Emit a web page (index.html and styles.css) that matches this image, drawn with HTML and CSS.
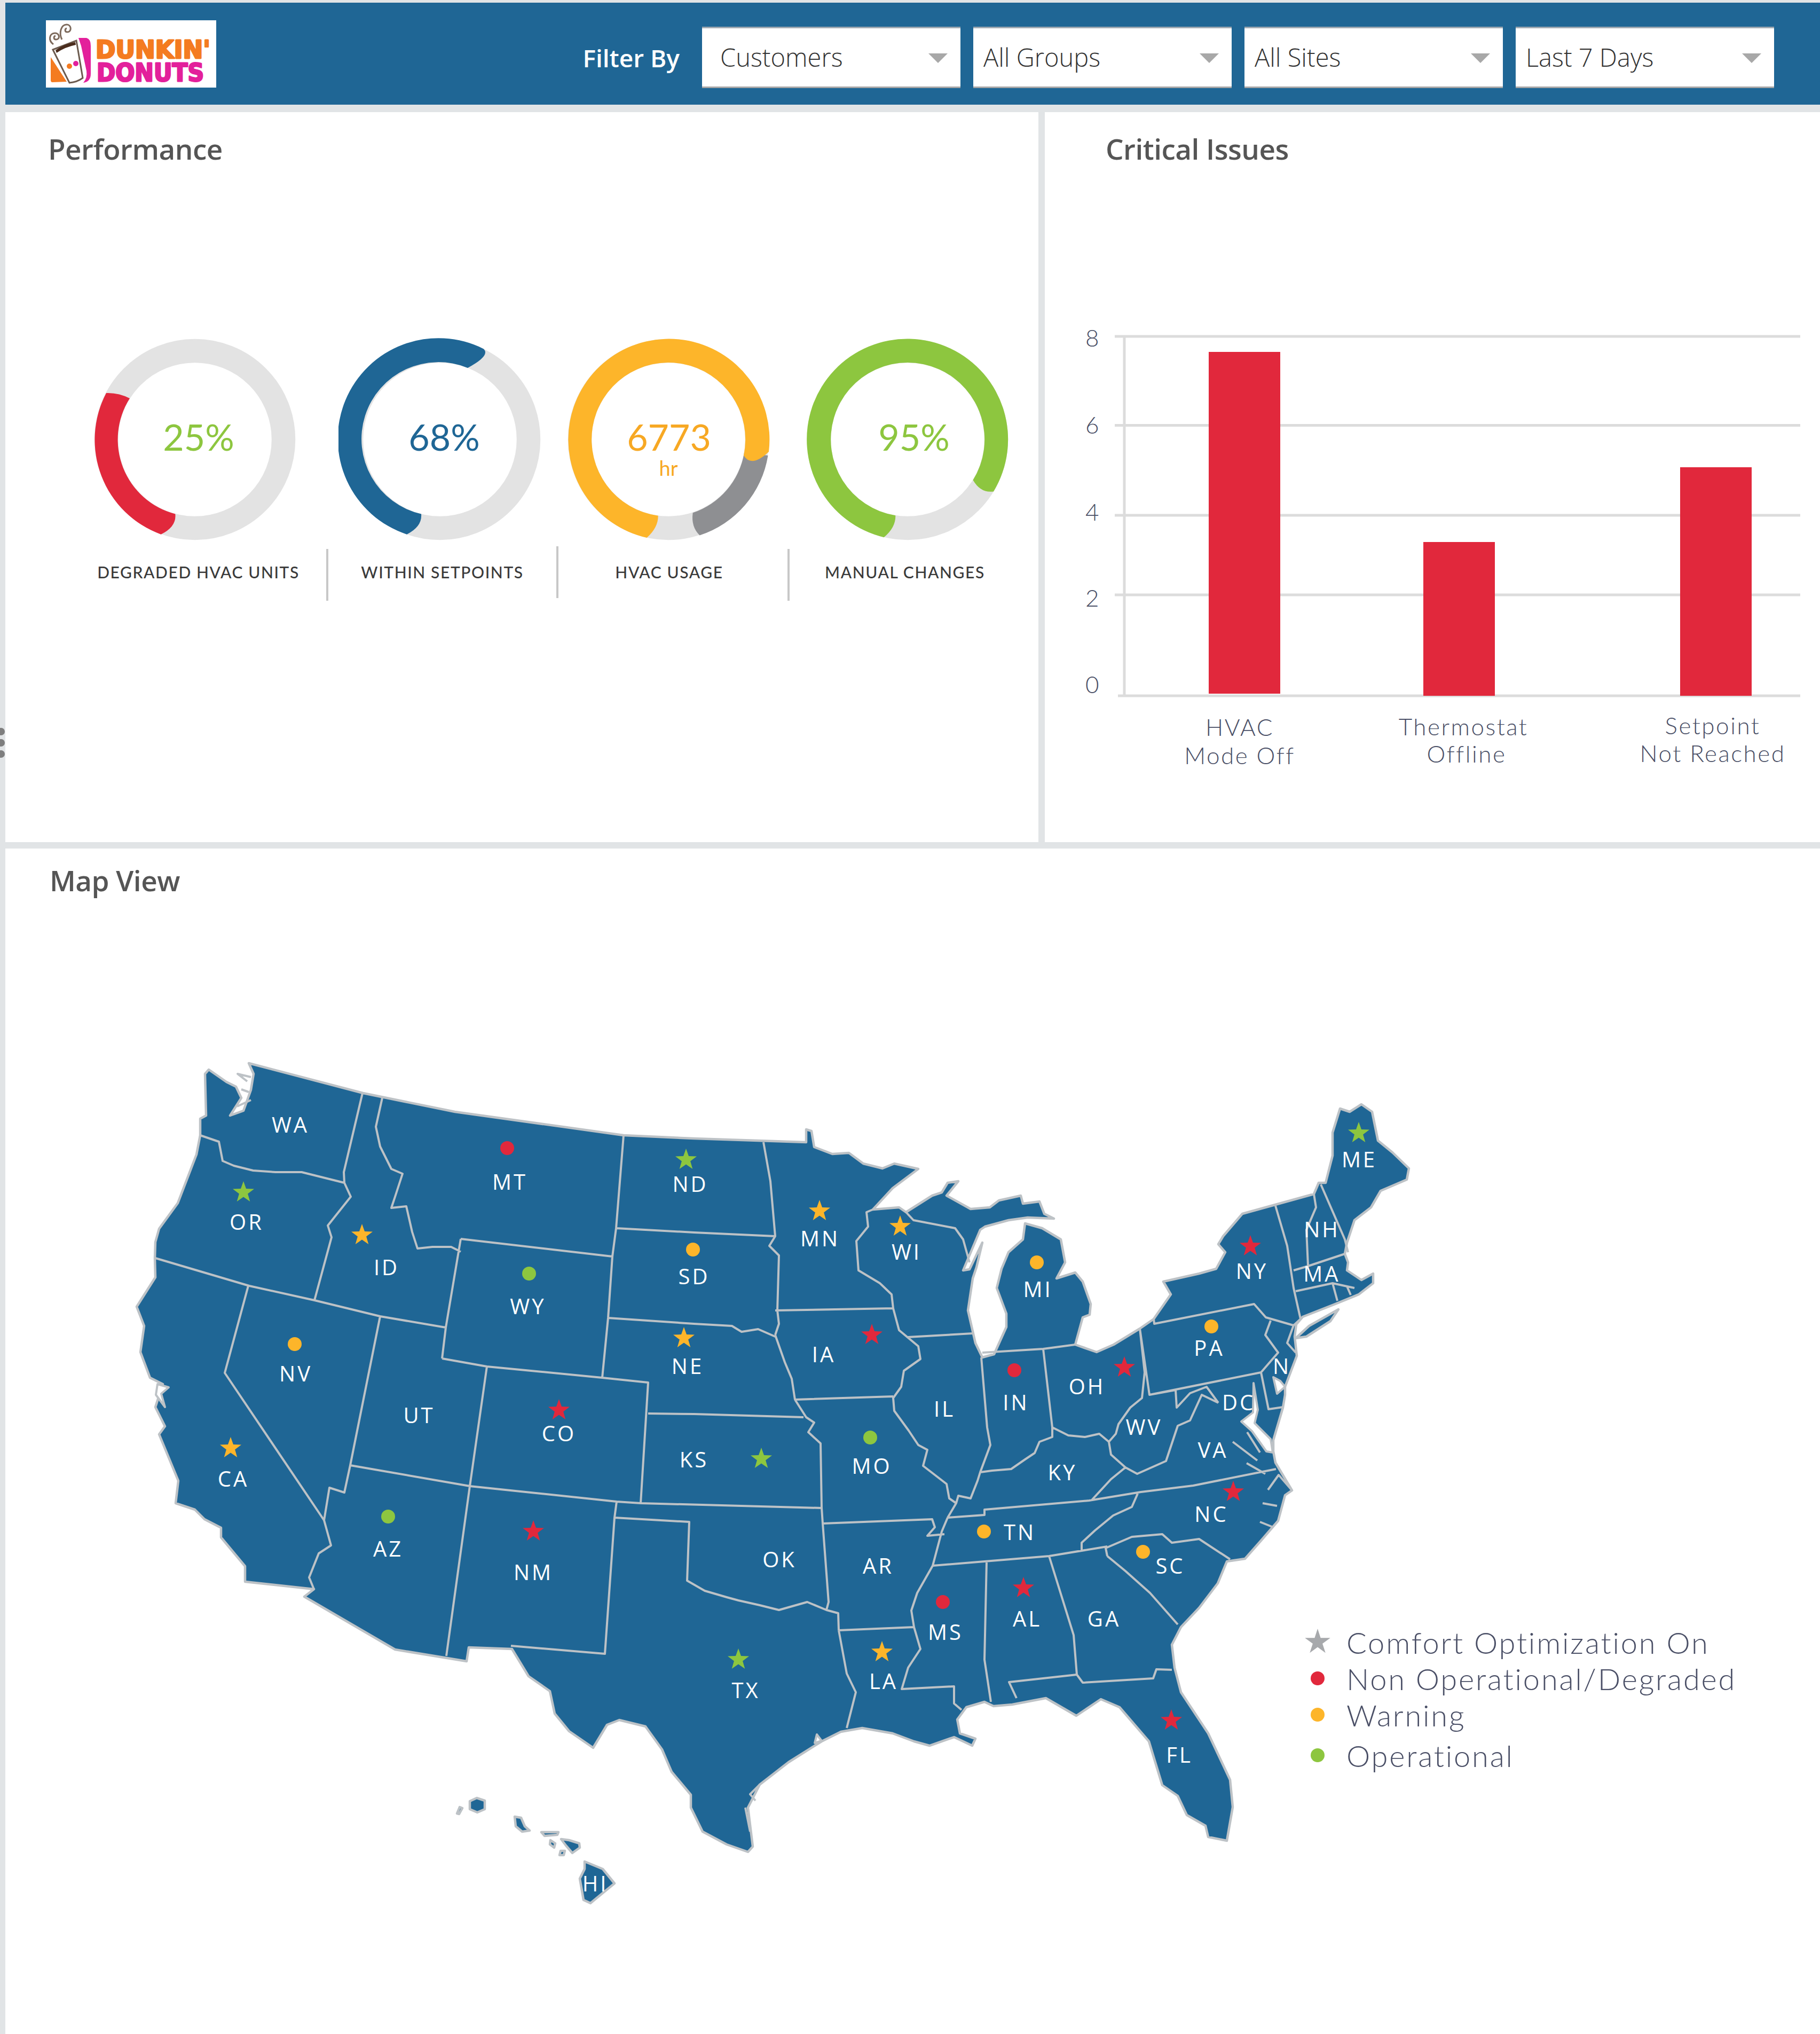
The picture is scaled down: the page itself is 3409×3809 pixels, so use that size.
FILE: index.html
```html
<!DOCTYPE html>
<html lang="en">
  <head>
    <meta charset="UTF-8" />
    <title>HVAC Dashboard</title>
    <link rel="stylesheet" href="styles.css">
  </head>
  <body>
    <div class="handle"><span></span><span></span><span></span></div>

    <header class="topbar">
      <div class="logo">
        <svg viewBox="0 0 319 126" width="319" height="126">
          <path d="M9 69 L39 115 L12 116 Q9 116 9 112 Z" fill="#f47b20" />
          <path d="M61 33 H76 Q84 35 84 48 V100 Q84 115 70 117 Q78 108 76 95 L66 48 Z" fill="#e3209b" />
          <path d="M13 55 L57 38 L69 108 Q58 116 44 117 Z" fill="#fff" stroke="#6b5a4e" stroke-width="3" />
          <path d="M18 56 Q36 43 55 41 L56 46 Q36 50 20 61 Z" fill="#4a2c1d" />
          <circle cx="44" cy="86" r="5" fill="#f47b20" />
          <circle cx="56" cy="81" r="5" fill="#e3209b" />
          <path d="M14 45 C4 38 6 24 17 24 C26 24 27 36 19 36 C14 36 14 30 18 29 M30 36 C24 24 28 8 39 8 C48 8 49 22 40 22 C35 22 35 16 39 15" fill="none" stroke="#7d6a5c" stroke-width="3" />
          <text class="logo-top" x="93" y="71" textLength="215" lengthAdjust="spacingAndGlyphs">DUNKIN'</text>
          <text class="logo-bottom" x="95" y="114" textLength="201" lengthAdjust="spacingAndGlyphs">DONUTS</text>
        </svg>
      </div>
      <div class="filter-by">Filter By</div>
      <div class="select select-first">Customers</div>
      <div class="select">All Groups</div>
      <div class="select">All Sites</div>
      <div class="select">Last 7 Days</div>
    </header>

    <div class="top-row">
      <section class="panel performance">
        <h2 class="panel-title">Performance</h2>

        <div class="donuts">
          <svg class="donut" viewBox="-190 -190 380 380" width="380" height="380">
            <circle class="track" r="166" />
            <path fill="#e1283c" d="M-166,-87 A188.5,188.5 0 0 0 -63.5,177.7 Q-34,163 -36.7,139.5 A144,144 0 0 1 -122,-77 Q-143,-88 -166,-87 Z" />
            <text class="donut-num num-green" x="7" y="21">25%</text>
          </svg>
          <svg class="donut donut-2" viewBox="-190 -190 380 380" width="380" height="380">
            <circle class="track" r="166" />
            <path fill="#1f6695" d="M82,-169.6 A188.5,188.5 0 1 0 -62,177.7 Q-33,163 -35,139.5 A144,144 0 1 1 52,-134 Q95,-157 82,-169.6 Z" />
            <text class="donut-num num-blue" x="8" y="21">68%</text>
          </svg>
          <svg class="donut donut-3" viewBox="-190 -190 380 380" width="380" height="380">
            <circle class="track" r="166" />
            <path fill="#8e8f92" d="M186.5,30 A188.5,188.5 0 0 1 58.5,179.5 Q42,163.5 45.7,137.3 A144,144 0 0 0 142,25 Z" />
            <path fill="#fdb52a" d="M188,23 A188.5,188.5 0 1 0 -40.4,184 Q-19,165 -19.3,142.7 A144,144 0 1 1 141,30 Q155.5,53.5 188,23 Z" />
            <text class="donut-num num-orange" x="1" y="21">6773</text>
            <text class="donut-unit num-orange" x="0" y="68">hr</text>
          </svg>
          <svg class="donut donut-4" viewBox="-190 -190 380 380" width="380" height="380">
            <circle class="track" r="166" />
            <path fill="#8dc63f" d="M161,97.4 A188.5,188.5 0 1 0 -44.4,183.2 Q-22,165 -22.7,142.2 A144,144 0 1 1 122.5,76 Q137,101 161,97.4 Z" />
            <text class="donut-num num-green" x="12" y="21">95%</text>
          </svg>
        </div>

        <div class="gauge-labels">
          <div class="gauge-label label-1">DEGRADED HVAC UNITS</div>
          <div class="gauge-label label-2">WITHIN SETPOINTS</div>
          <div class="gauge-label label-3">HVAC USAGE</div>
          <div class="gauge-label label-4">MANUAL CHANGES</div>
        </div>
      </section>

      <section class="panel critical">
        <h2 class="panel-title">Critical Issues</h2>

        <svg class="chart" viewBox="1957 560 1452 900" width="1452" height="900">
          <g class="grid">
            <line x1="2088" y1="630" x2="3372" y2="630" />
            <line x1="2088" y1="796.5" x2="3372" y2="796.5" />
            <line x1="2088" y1="965" x2="3372" y2="965" />
            <line x1="2088" y1="1114" x2="3372" y2="1114" />
            <line x1="2094" y1="1303" x2="3372" y2="1303" />
            <line x1="2106" y1="630" x2="2106" y2="1303" />
          </g>
          <rect class="bar" x="2264" y="659" width="134" height="640" />
          <rect class="bar" x="2666" y="1015" width="134" height="288" />
          <rect class="bar" x="3147" y="875" width="134" height="428" />
          <g class="axis-y">
            <text x="2047" y="649">8</text>
            <text x="2047" y="812">6</text>
            <text x="2047" y="975">4</text>
            <text x="2047" y="1136">2</text>
            <text x="2047" y="1298">0</text>
          </g>
          <g class="axis-x">
            <text x="2322" y="1378">HVAC</text>
            <text x="2322" y="1431">Mode Off</text>
            <text x="2741" y="1377">Thermostat</text>
            <text x="2747" y="1428">Offline</text>
            <text x="3208" y="1375">Setpoint</text>
            <text x="3208" y="1427">Not Reached</text>
          </g>
        </svg>
      </section>
    </div>

    <section class="panel map-view">
      <h2 class="panel-title">Map View</h2>

      <svg class="map" viewBox="10 1950 3399 1650" width="3399" height="1650">
        <defs>
          <path id="star" d="M0-21 L5-6.9 20-6.5 8.1 2.6 12.3 17 0 8.5 -12.3 17 -8.1 2.6 -20-6.5 -5-6.9Z" />
        </defs>

        <path class="land" d="M466,1991 680,2047 852,2082 1168,2126 1300,2132 1510,2139 1510,2115 1520,2118 1525,2148 1559,2161 1590,2159 1617,2179 1653,2188 1675,2179 1720,2189 1672,2225 1635,2265 1684,2261 1697,2270 1746,2239 1764,2233 1775,2215 1795,2212 1773,2239 1818,2264 1854,2261 1871,2248 1912,2239 1916,2254 1947,2250 1956,2273 1974,2282 1925,2280 1889,2285 1845,2297 1836,2303 1804,2379 1816,2377 1840,2327 1829,2373 1822,2394 1813,2454 1827,2515 1840,2542 1862,2536 1885,2485 1885,2460 1867,2412 1876,2376 1889,2345 1916,2321 1920,2291 1952,2300 1987,2321 1995,2364 1979,2394 2014,2383 2028,2400 2043,2442 2041,2462 2028,2467 2014,2518 2054,2532 2086,2518 2135,2488 2161,2470 2193,2424 2179,2400 2246,2385 2278,2376 2295,2345 2282,2330 2291,2315 2327,2273 2461,2236 2470,2215 2483,2215 2496,2164 2496,2121 2510,2076 2528,2082 2550,2068 2570,2082 2581,2136 2608,2158 2639,2188 2635,2209 2586,2230 2568,2261 2537,2285 2523,2327 2519,2348 2525,2364 2523,2379 2550,2397 2572,2385 2572,2403 2545,2424 2501,2442 2440,2466 2428,2480 2425,2503 2429,2539 2407,2597 2407,2612 2403,2636 2385,2697 2385,2718 2389,2739 2420,2791 2407,2800 2394,2848 2362,2885 2332,2919 2298,2924 2281,2965 2246,3011 2212,3047 2195,3080 2200,3123 2212,3169 2263,3246 2304,3333 2309,3384 2298,3447 2263,3440 2258,3419 2223,3399 2206,3363 2177,3343 2166,3307 2152,3261 2097,3197 2062,3182 2016,3213 1959,3180 1896,3192 1861,3195 1844,3187 1810,3197 1793,3220 1798,3246 1827,3256 1821,3269 1787,3253 1741,3269 1712,3261 1672,3246 1615,3236 1575,3243 1539,3261 1477,3300 1423,3342 1401,3385 1410,3458 1401,3468 1361,3454 1316,3430 1294,3385 1294,3361 1258,3318 1240,3276 1209,3233 1160,3221 1137,3230 1111,3273 1066,3242 1039,3209 1030,3167 990,3139 959,3088 878,3085 874,3111 740,3089 570,2990 588,2976 459,2962 459,2933 414,2879 414,2861 383,2845 365,2827 329,2815 334,2773 298,2686 309,2671 291,2635 305,2592 281,2580 263,2532 270,2483 256,2447 291,2392 290,2356 291,2326 298,2301 333,2253 368,2162 375,2126 375,2095 386,2089 384,2011 391,2003 424,2026 442,2035 452,2056 431,2089 456,2080 470,2041 475,2011 Z" />
        <path class="land" d="M2427,2506 2452,2483 2507,2452 2492,2474 2447,2503 Z" />
        <path class="land" d="M893,3367 908,3372 908,3388 894,3394 880,3388 880,3373 Z M861,3384 866,3386 860,3397 856,3396 Z M964,3402 976,3404 983,3420 992,3428 978,3430 966,3420 Z M1014,3431 1046,3431 1044,3436 1020,3438 Z M1051,3444 1066,3446 1085,3452 1086,3460 1072,3470 1060,3456 Z M1031,3446 1040,3452 1038,3460 1030,3454 Z M1050,3466 1058,3466 1056,3474 1048,3474 Z M1095,3486 1129,3500 1151,3527 1129,3545 1106,3564 1093,3558 1086,3518 1095,3500 Z" />

        <path class="water" d="M2348,2590 2356,2640 2350,2665 2380,2695 2384,2720 2372,2718 2345,2680 2325,2662 2347,2645 Z" />
        <path class="water" d="M2385,2579 2398,2586 2407,2597 2392,2610 Z" />
        <path class="water" d="M295,2592 316,2598 302,2610 309,2635 292,2612 Z" />
        <path class="water" d="M1530,3248 1539,3260 1526,3264 Z" />

        <path class="borders" d="
          M375,2126 410,2138 417,2174 438,2183 474,2192 516,2195 565,2195 645,2215
          M679,2047 644,2195 645,2215 657,2241 614,2295 621,2317 589,2435
          M291,2356 467,2408 589,2435 712,2465 835,2486
          M465,2408 421,2571 607,2847 620,2894 597,2909 579,2954 588,2976
          M712,2465 656,2744 645,2795 617,2786 607,2847
          M716,2056 704,2110 712,2147 733,2189 754,2198 740,2241 733,2262 761,2259 772,2307 782,2338 810,2335 845,2335 863,2344
          M863,2320 835,2486 828,2544
          M863,2320 1147,2353
          M1168,2126 1154,2300 1147,2353 1139,2468 1128,2580
          M828,2544 912,2559 1128,2580 1214,2589 1200,2815
          M912,2559 880,2783 836,3101
          M656,2744 880,2783 1155,2812 1200,2815 1539,2824
          M1155,2812 1151,2842 1133,3097 957,3082
          M1151,2842 1291,2850 1287,2960 1320,2979 1361,2991 1383,2997 1423,3006 1459,3015 1512,3000 1548,3015 1570,3021 1571,3053
          M1214,2647 1300,2648 1505,2654
          M1139,2468 1300,2479 1371,2483 1389,2494 1420,2489 1452,2503
          M1154,2300 1300,2308 1452,2315
          M1430,2139 1443,2212 1452,2315 1441,2333 1459,2351 1456,2454 1459,2479 1452,2500
          M1452,2454 1673,2450
          M1635,2265 1623,2270 1626,2297 1604,2324 1608,2379 1648,2403 1670,2424 1673,2450 1684,2491 1720,2521 1724,2545 1693,2567 1688,2597 1673,2618 1675,2642 1702,2679 1720,2706 1737,2715 1729,2745 1773,2779 1778,2806 1791,2815
          M1700,2504 1822,2497
          M1697,2270 1711,2285 1789,2300 1804,2321 1809,2339 1816,2364
          M1452,2500 1470,2551 1483,2582 1489,2621 1673,2615
          M1489,2621 1510,2654 1525,2664 1514,2682 1537,2703 1539,2824 1541,2853 1746,2845 1751,2860 1737,2876 1769,2873
          M1541,2853 1552,3000 1548,3015
          M1838,2542 1849,2673 1855,2706 1836,2757 1831,2773 1818,2806 1795,2801 1791,2815 1775,2842
          M1840,2533 1954,2526 2014,2518
          M1954,2526 1971,2673 1971,2691 1947,2700 1938,2721 1920,2733 1894,2751 1858,2754 1836,2757
          M1971,2673 2001,2688 2032,2691 2059,2685 2077,2700 2090,2685 2095,2667 2117,2636 2139,2618 2144,2570 2135,2488
          M2077,2700 2081,2724 2108,2748 2081,2770 2045,2809
          M2108,2748 2130,2760 2184,2736 2206,2670 2229,2660 2251,2612 2282,2627
          M2153,2612 2202,2603 2204,2636 2229,2609 2260,2597 2282,2627
          M2135,2488 2153,2612 2362,2570
          M2161,2470 2162,2479 2349,2442 2371,2467 2423,2482
          M2380,2473 2370,2500 2394,2533 2362,2570 2376,2639 2403,2635
          M2423,2482 2411,2515 2427,2533
          M2389,2258 2411,2333 2423,2412 2436,2470 2423,2482
          M2461,2236 2465,2261 2447,2303 2450,2370
          M2474,2218 2519,2321 2525,2345
          M2423,2379 2450,2371 2519,2348
          M2427,2418 2496,2403 2537,2412
          M2496,2403 2505,2436
          M2523,2409 2530,2425
          M1775,2842 1844,2837 1844,2827 2040,2810 2137,2794 2235,2782 2390,2751
          M2131,2797 2120,2822 2085,2838 2051,2866 2026,2889 2026,2904
          M1747,2932 1844,2924 1965,2914 2074,2896
          M1775,2842 1764,2868 1747,2932 1718,2983 1707,3016 1712,3047
          M1571,3053 1712,3047
          M1571,3053 1586,3134 1603,3169 1586,3236
          M1712,3047 1724,3088 1701,3123 1689,3163 1787,3158 1787,3190 1801,3202
          M1848,2924 1844,3108 1856,3187
          M1965,2914 2011,3062 2017,3136
          M2017,3136 1890,3150 1904,3180
          M2017,3136 2028,3151 2160,3143 2166,3126 2195,3127
          M2074,2914 2108,2942 2154,2983 2206,3042
          M2074,2914 2071,2899 2120,2878 2177,2873 2195,2889 2246,2882 2304,2920
          M2420,2791 2395,2762 2375,2790 M2392,2820 2365,2815 M2385,2860 2360,2850
          M2336,2682 2360,2720 M2309,2700 2355,2735 M2335,2740 2370,2760
          M470,2017 445,2011 463,2025 M466,2045 452,2040 M444,2072 470,2060
          M1396,3385 1405,3430 M1423,3342 1405,3360 1415,3372
        " />

        <g class="marks">
          <use href="#star" class="green" x="456" y="2233" />
          <use href="#star" class="orange" x="678" y="2313" />
          <circle class="red" cx="950" cy="2150" r="13" />
          <use href="#star" class="green" x="1285" y="2172" />
          <circle class="green" cx="991" cy="2385" r="13" />
          <circle class="orange" cx="1298" cy="2340" r="13" />
          <circle class="orange" cx="552" cy="2517" r="13" />
          <use href="#star" class="red" x="1047" y="2641" />
          <use href="#star" class="orange" x="1281" y="2506" />
          <use href="#star" class="orange" x="432" y="2712" />
          <circle class="green" cx="727" cy="2840" r="13" />
          <use href="#star" class="red" x="999" y="2868" />
          <use href="#star" class="green" x="1426" y="2732" />
          <use href="#star" class="green" x="1383" y="3108" />
          <use href="#star" class="orange" x="1535" y="2268" />
          <use href="#star" class="red" x="1633" y="2500" />
          <circle class="green" cx="1630" cy="2692" r="13" />
          <use href="#star" class="orange" x="1686" y="2297" />
          <circle class="orange" cx="1942" cy="2364" r="13" />
          <circle class="red" cx="1900" cy="2566" r="13" />
          <use href="#star" class="red" x="2106" y="2561" />
          <circle class="orange" cx="1843" cy="2868" r="13" />
          <use href="#star" class="red" x="2310" y="2794" />
          <circle class="orange" cx="2141" cy="2906" r="13" />
          <circle class="red" cx="1766" cy="3000" r="13" />
          <use href="#star" class="red" x="1917" y="2974" />
          <use href="#star" class="orange" x="1652" y="3094" />
          <use href="#star" class="red" x="2194" y="3222" />
          <use href="#star" class="red" x="2342" y="2334" />
          <circle class="orange" cx="2269" cy="2484" r="13" />
          <use href="#star" class="green" x="2545" y="2122" />
        </g>

        <g class="states">
          <text x="544" y="2121">WA</text>
          <text x="462" y="2303">OR</text>
          <text x="724" y="2388">ID</text>
          <text x="955" y="2228">MT</text>
          <text x="1293" y="2232">ND</text>
          <text x="989" y="2461">WY</text>
          <text x="1300" y="2405">SD</text>
          <text x="554" y="2587">NV</text>
          <text x="785" y="2665">UT</text>
          <text x="1047" y="2699">CO</text>
          <text x="1288" y="2573">NE</text>
          <text x="437" y="2784">CA</text>
          <text x="727" y="2915">AZ</text>
          <text x="999" y="2959">NM</text>
          <text x="1300" y="2748">KS</text>
          <text x="1460" y="2935">OK</text>
          <text x="1397" y="3180">TX</text>
          <text x="1536" y="2334">MN</text>
          <text x="1543" y="2551">IA</text>
          <text x="1633" y="2760">MO</text>
          <text x="1645" y="2947">AR</text>
          <text x="1655" y="3163">LA</text>
          <text x="1698" y="2359">WI</text>
          <text x="1769" y="2653">IL</text>
          <text x="1944" y="2429">MI</text>
          <text x="1903" y="2641">IN</text>
          <text x="2036" y="2611">OH</text>
          <text x="1990" y="2772">KY</text>
          <text x="1910" y="2884">TN</text>
          <text x="1771" y="3071">MS</text>
          <text x="1924" y="3046">AL</text>
          <text x="2068" y="3046">GA</text>
          <text x="2209" y="3301">FL</text>
          <text x="2192" y="2947">SC</text>
          <text x="2269" y="2850">NC</text>
          <text x="2272" y="2730">VA</text>
          <text x="2143" y="2687">WV</text>
          <text x="2265" y="2539">PA</text>
          <text x="2345" y="2395">NY</text>
          <text x="2546" y="2186">ME</text>
          <text x="2476" y="2317">NH</text>
          <text x="2476" y="2400">MA</text>
          <text x="2401" y="2573">N</text>
          <text x="2320" y="2641">DC</text>
          <text x="1115" y="3542">HI</text>
        </g>
      </svg>

      <ul class="legend">
        <li><svg width="52" height="52" viewBox="-26 -26 52 52"><path d="M0-25 L5.6-7.8 23.8-7.8 9.1 3 14.7 20.2 0 9.6 -14.7 20.2 -9.1 3 -23.8-7.8 -5.6-7.8Z" fill="#a7a9ac" /></svg>Comfort Optimization On</li>
        <li><svg width="52" height="52" viewBox="-26 -26 52 52"><circle r="13" fill="#e1283c" /></svg>Non Operational/Degraded</li>
        <li><svg width="52" height="52" viewBox="-26 -26 52 52"><circle r="13" fill="#fdb52a" /></svg>Warning</li>
        <li class="legend-last"><svg width="52" height="52" viewBox="-26 -26 52 52"><circle r="13" fill="#8dc63f" /></svg>Operational</li>
      </ul>
    </section>
  </body>
</html>
```

FILE: styles.css
```css
body {
  margin: 0;
  width: 3409px;
  height: 3809px;
  padding: 5px 0 0 10px;
  box-sizing: border-box;
  overflow: hidden;
  background-color: #e1e4e6;
  font-family: "Open Sans", sans-serif;
  position: relative;
}

.handle {
  position: absolute;
  left: -5px;
  top: 1363px;
  display: flex;
  flex-direction: column;
  gap: 7px;
}
.handle span {
  width: 14px;
  height: 14px;
  border-radius: 50%;
  background-color: #7e7e7e;
}

/* top bar */
.topbar {
  height: 191px;
  background-color: #1f6695;
  display: flex;
  align-items: center;
  padding: 0 86px 0 76px;
  gap: 24px;
  margin-bottom: 14px;
}
.logo {
  width: 319px;
  height: 126px;
  background-color: #fff;
  margin-right: auto;
}
.logo svg {
  display: block;
  overflow: visible;
}
.logo-top,
.logo-bottom {
  font-family: "DejaVu Sans", sans-serif;
  font-weight: 700;
  font-size: 46px;
  stroke-width: 3px;
  stroke-linejoin: round;
}
.logo-top {
  fill: #f47b20;
  stroke: #f47b20;
}
.logo-bottom {
  fill: #e3209b;
  stroke: #e3209b;
}
.filter-by {
  color: #fff;
  font-size: 46px;
  font-weight: 600;
  margin-right: 18px;
  margin-top: 14px;
}
.select {
  width: 484px;
  height: 115px;
  box-sizing: border-box;
  background-color: #fff;
  border-top: 3px solid #9fa9b2;
  border-bottom: 3px solid #a6a6a6;
  color: #333;
  font-size: 47px;
  font-weight: 300;
  line-height: 109px;
  padding-left: 19px;
  position: relative;
  margin-top: 14px;
}
.select-first {
  padding-left: 34px;
}
.select::after {
  content: "";
  position: absolute;
  right: 24px;
  top: 47px;
  border-left: 18px solid transparent;
  border-right: 18px solid transparent;
  border-top: 18px solid #a8a8a8;
}

/* panels */
.panel {
  background-color: #fff;
  position: relative;
}
.panel-title {
  margin: 0;
  font-size: 53px;
  font-weight: 600;
  letter-spacing: -0.5px;
  color: #555;
  line-height: 76px;
}
.top-row {
  display: flex;
  gap: 12px;
  height: 1367px;
  margin-bottom: 12px;
}
.performance {
  width: 1935px;
  height: 1367px;
}
.performance .panel-title {
  padding: 31px 0 0 80px;
}
.critical {
  flex: 1;
}
.critical .panel-title {
  padding: 31px 0 0 114px;
}
.map-view {
  height: 2220px;
}
.map-view .panel-title {
  padding: 22px 0 0 83px;
}

/* gauges */
.donuts {
  display: flex;
  padding: 316px 0 0 165px;
}
.donut {
  display: block;
  flex: none;
}
.donut-2 {
  margin-left: 79px;
}
.donut-3 {
  margin-left: 48px;
}
.donut-4 {
  margin-left: 68px;
}
.track {
  fill: none;
  stroke: #e3e3e3;
  stroke-width: 44.5px;
}
.donut-num,
.donut-unit {
  font-family: Lato, sans-serif;
  font-weight: 400;
  text-anchor: middle;
}
.donut-num {
  font-size: 68px;
}
.donut-unit {
  font-size: 38px;
}
.num-green {
  fill: #8dc63f;
}
.num-blue {
  fill: #1f6695;
}
.num-orange {
  fill: #f7a823;
}
.gauge-labels {
  display: grid;
  grid-template-columns: 601px 431px 433px 470px;
  margin-top: 15px;
}
.gauge-label {
  height: 97px;
  box-sizing: border-box;
  padding-top: 25px;
  text-align: center;
  font-family: Lato, sans-serif;
  font-size: 30px;
  font-weight: 500;
  line-height: 36px;
  letter-spacing: 1.6px;
  color: #3a3a3a;
}
.label-1 {
  padding-left: 122px;
}
.label-2,
.label-4 {
  border-left: 4px solid #c8c8c8;
}
.label-3 {
  border-left: 4px solid #c8c8c8;
  margin-top: -5px;
  padding-top: 30px;
  padding-right: 14px;
}
.label-4 {
  padding-right: 34px;
}

/* chart */
.chart {
  display: block;
  margin-top: 243px;
}
.grid line {
  stroke: #dcdcdc;
  stroke-width: 5px;
}
.bar {
  fill: #e1283c;
}
.axis-y text,
.axis-x text {
  font-family: Lato, sans-serif;
  font-weight: 300;
  font-size: 44px;
  fill: #4a4f66;
  text-anchor: middle;
  letter-spacing: 2.5px;
}

/* map */
.map {
  display: block;
  margin-top: 263px;
}
.land {
  fill: #1f6695;
  stroke: #bdc2c6;
  stroke-width: 4.5px;
  stroke-linejoin: round;
}
.water {
  fill: #fff;
  stroke: #bdc2c6;
  stroke-width: 4px;
  stroke-linejoin: round;
}
.borders {
  fill: none;
  stroke: #bdc2c6;
  stroke-width: 4px;
  stroke-linejoin: round;
}
.marks .red {
  fill: #e1283c;
}
.marks .orange {
  fill: #fdb52a;
}
.marks .green {
  fill: #8dc63f;
}
.states text {
  font-family: "Open Sans", sans-serif;
  font-size: 40px;
  fill: #fff;
  text-anchor: middle;
  letter-spacing: 4px;
}

/* legend */
.legend {
  position: absolute;
  left: 2432px;
  top: 1452px;
  margin: 0;
  padding: 0;
  list-style: none;
  font-family: Lato, sans-serif;
  font-weight: 300;
  font-size: 56px;
  color: #4a4f66;
  letter-spacing: 2.8px;
}
.legend li {
  display: flex;
  align-items: center;
  gap: 28px;
  height: 68px;
}
.legend-last {
  margin-top: 8px;
}
```
